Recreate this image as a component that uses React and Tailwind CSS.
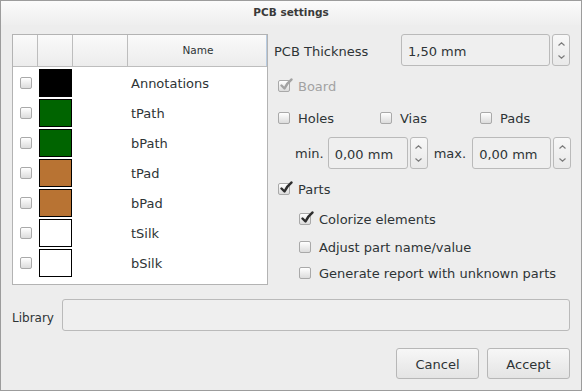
import React from "react";

const layers = [
  { name: "Annotations", color: "bg-[#000000]" },
  { name: "tPath", color: "bg-[#006400]" },
  { name: "bPath", color: "bg-[#006400]" },
  { name: "tPad", color: "bg-[#b87333]" },
  { name: "bPad", color: "bg-[#b87333]" },
  { name: "tSilk", color: "bg-white" },
  { name: "bSilk", color: "bg-white" },
];

const CheckBox = ({ checked = false, disabled = false }) => (
  <span className="relative inline-block w-[12px] h-[12px] shrink-0 rounded-[2px] border border-[#a9a9a9] bg-linear-to-b from-white to-[#dcdcdc]">
    {checked && (
      <svg
        className="absolute left-[0px] top-[-3px]"
        width="14"
        height="14"
        viewBox="0 0 14 14"
      >
        <path
          d="M2.5 7.5 L5.5 10.5 Q8 5 12.5 1.5"
          fill="none"
          stroke={disabled ? "#a3a3a3" : "#2e2e2e"}
          strokeWidth="2.4"
          strokeLinecap="round"
          strokeLinejoin="round"
        />
      </svg>
    )}
  </span>
);

const Spin = ({ value, width }) => (
  <div className="flex gap-[2px] h-[32px]">
    <div
      className={`${width} rounded-[3px] border border-[#bababa] bg-[#efefef] flex items-center pl-[6px] pt-[3px]`}
    >
      {value}
    </div>
    <div className="w-[18px] rounded-[3px] border border-[#bababa] bg-linear-to-b from-[#f8f8f8] to-[#e9e9e9] flex flex-col items-center justify-center gap-[9px]">
      <svg width="7" height="4" viewBox="0 0 7 4">
        <path d="M0.5 3.5 L3.5 0.8 L6.5 3.5" fill="none" stroke="#7b7b7b" strokeWidth="1.2" />
      </svg>
      <svg width="7" height="4" viewBox="0 0 7 4">
        <path d="M0.5 0.5 L3.5 3.2 L6.5 0.5" fill="none" stroke="#7b7b7b" strokeWidth="1.2" />
      </svg>
    </div>
  </div>
);

const Option = ({ label, checked, disabled }) => (
  <div className="flex items-center gap-[8px]">
    <CheckBox checked={checked} disabled={disabled} />
    <span className={disabled ? "text-[#a2a2a2] pt-[2px]" : "pt-[1px]"}>{label}</span>
  </div>
);

const App = () => {
  return (
    <div className="w-[582px] h-[391px] border border-[#9c9c9c] bg-[#ededed] flex flex-col text-[13px] text-[#2e3436] font-['DejaVu_Sans',sans-serif]">
      <div className="h-[24px] shrink-0 bg-linear-to-b from-[#fbfbfb] to-[#eeeeee] flex items-center justify-center">
        <span className="text-[10.5px] font-bold text-[#3a3a3a]">PCB settings</span>
      </div>

      <div className="flex-1 flex flex-col px-[11px] pt-[9px]">
        <div className="flex gap-[6px]">
          <div className="w-[256px] h-[251px] border border-[#b3b3b3] bg-white flex flex-col">
            <div className="h-[32px] flex border-b border-[#bdbdbd] bg-linear-to-b from-[#fafafa] to-[#ececec] text-[10.5px]">
              <div className="w-[25px] border-r border-[#bdbdbd]" />
              <div className="w-[35px] border-r border-[#bdbdbd]" />
              <div className="w-[55px] border-r border-[#bdbdbd]" />
              <div className="flex-1 flex items-center justify-center pl-[2px] pt-[1px] border-r border-[#b8cbe0]">
                Name
              </div>
            </div>
            <div className="pt-[1px]">
              {layers.map((layer) => (
                <div key={layer.name} className="h-[30px] flex items-center">
                  <div className="w-[25px] flex justify-center pl-[1px]">
                    <CheckBox />
                  </div>
                  <div className="w-[35px] pl-[1px]">
                    <div className={`w-[33px] h-[28px] border border-black ${layer.color}`} />
                  </div>
                  <div className="w-[55px]" />
                  <div className="pl-[3px] pt-[2px]">{layer.name}</div>
                </div>
              ))}
            </div>
          </div>

          <div className="w-[296px] flex flex-col">
            <div className="flex items-center h-[32px]">
              <div className="w-[127px] pt-[3px]">PCB Thickness</div>
              <Spin value="1,50 mm" width="w-[149px]" />
            </div>
            <div className="h-[40px] flex items-center pl-[4px]">
              <Option label="Board" checked disabled />
            </div>
            <div className="h-[24px] flex items-center pl-[4px]">
              <div className="w-[102px]">
                <Option label="Holes" />
              </div>
              <div className="w-[100px]">
                <Option label="Vias" />
              </div>
              <Option label="Pads" />
            </div>
            <div className="mt-[7px] flex items-center pl-[21px]">
              <span className="mr-[4px] pt-[2px]">min.</span>
              <Spin value="0,00 mm" width="w-[80px]" />
              <span className="ml-[6px] mr-[6px] pt-[2px]">max.</span>
              <Spin value="0,00 mm" width="w-[79px]" />
            </div>
            <div className="mt-[8px] h-[24px] flex items-center pl-[4px]">
              <Option label="Parts" checked />
            </div>
            <div className="mt-[6px] h-[24px] flex items-center pl-[25px]">
              <Option label="Colorize elements" checked />
            </div>
            <div className="mt-[4px] h-[24px] flex items-center pl-[25px]">
              <Option label="Adjust part name/value" />
            </div>
            <div className="mt-[2px] h-[24px] flex items-center pl-[25px]">
              <Option label="Generate report with unknown parts" />
            </div>
          </div>
        </div>

        <div className="mt-[14px] flex items-center">
          <div className="w-[50px] text-[12px] pt-[5px]">Library</div>
          <div className="flex-1 h-[32px] rounded-[3px] border border-[#bababa] bg-[#efefef]" />
        </div>

        <div className="mt-[17px] flex justify-end gap-[8px]">
          <button className="w-[83px] h-[31px] rounded-[3px] border border-[#b7b7b7] bg-linear-to-b from-[#f7f7f7] to-[#e4e4e4] pt-[2px]">
            Cancel
          </button>
          <button className="w-[83px] h-[31px] rounded-[3px] border border-[#b7b7b7] bg-linear-to-b from-[#f7f7f7] to-[#e4e4e4] pt-[2px]">
            Accept
          </button>
        </div>
      </div>
    </div>
  );
};

export default App;
